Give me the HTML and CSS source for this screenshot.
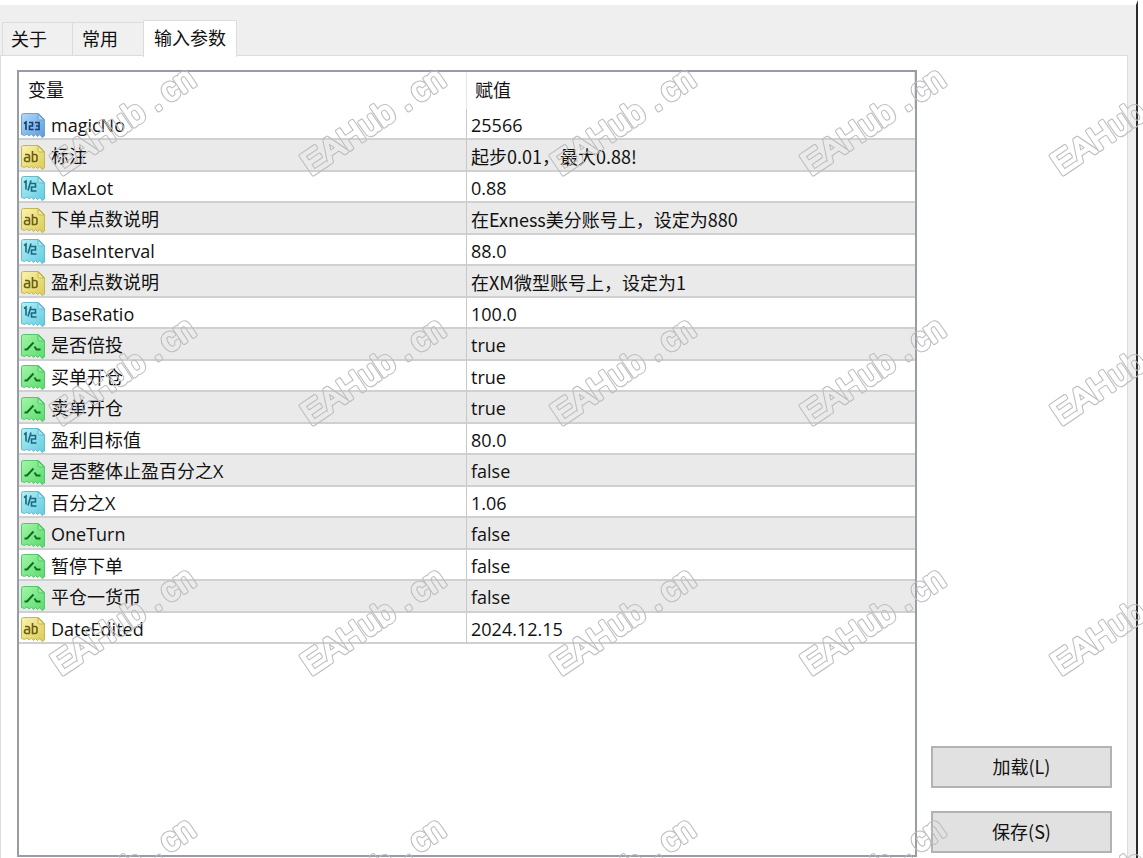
FILE: index.html
```html
<!DOCTYPE html>
<html lang="zh-CN">
<head>
    <meta charset="UTF-8">
    <title>输入参数</title>
    <link rel="stylesheet" href="styles.css">
</head>
<body>
    <svg class="defs" width="0" height="0" aria-hidden="true">
        <defs>
            <linearGradient id="gBlue" x1="0" y1="0" x2="1" y2="1">
                <stop offset="0" stop-color="#b4daf8"/>
                <stop offset="1" stop-color="#5b9ada"/>
            </linearGradient>
            <linearGradient id="gYellow" x1="0" y1="0" x2="1" y2="1">
                <stop offset="0" stop-color="#fbf3ae"/>
                <stop offset="1" stop-color="#d9cb58"/>
            </linearGradient>
            <linearGradient id="gCyan" x1="0" y1="0" x2="1" y2="1">
                <stop offset="0" stop-color="#b5eff6"/>
                <stop offset="1" stop-color="#62cbe0"/>
            </linearGradient>
            <linearGradient id="gGreen" x1="0" y1="0" x2="1" y2="1">
                <stop offset="0" stop-color="#a4f5a8"/>
                <stop offset="1" stop-color="#57dc6b"/>
            </linearGradient>
            <path id="paper" d="M2.5 .5H17.5L23.5 6.5V23L21 24.500L19 21.500L16.500 23.500L14.500 21.500L12.500 23.500L10.500 21L8 23L6 21L3.500 22.500L.5 21.500V2.500Q.5 .5 2.500 .5Z"/>
            <path id="fold" d="M17 1V5.500Q17 7 18.500 7H23Z"/>
        </defs>
        <symbol id="int" viewBox="0 0 24 25">
            <use href="#paper" fill="url(#gBlue)" stroke="#6ba3d8"/>
            <use href="#fold" fill="#a9d2f5" stroke="#6ba3d8"/>
            <path d="M3 10.500L5 9V17M8 9.500H11.500V13H8.500V16.500H12.500M14 9.500H18V16.500H14M15 13H18" fill="none" stroke="#123f70" stroke-width="1.600"/>
        </symbol>
        <symbol id="str" viewBox="0 0 24 25">
            <use href="#paper" fill="url(#gYellow)" stroke="#c4b655"/>
            <use href="#fold" fill="#f3e990" stroke="#c4b655"/>
            <path d="M4 9.500H6.500Q8.500 9.500 8.500 11.500V16.500M8.500 12.500H5.500Q3.500 12.500 3.500 14.500T5.500 16.500H8.500M11.500 6V16.500H14Q16 16.500 16 14.500V11.500Q16 9.500 14 9.500H11.500" fill="none" stroke="#6b5e12" stroke-width="1.600"/>
        </symbol>
        <symbol id="dbl" viewBox="0 0 24 25">
            <use href="#paper" fill="url(#gCyan)" stroke="#66bccc"/>
            <use href="#fold" fill="#a5e8f1" stroke="#66bccc"/>
            <path d="M3 6.500L5 5V13.500M10 4.500L7 14.500M10 7.500H14.500V11H10.500V15H15.500" fill="none" stroke="#176a80" stroke-width="1.600"/>
        </symbol>
        <symbol id="bool" viewBox="0 0 24 25">
            <use href="#paper" fill="url(#gGreen)" stroke="#58c46c"/>
            <use href="#fold" fill="#8df09a" stroke="#58c46c"/>
            <path d="M3.500 15.500H6L12.500 8.500M13.500 12.500L15.500 15.500H19.500" fill="none" stroke="#0f6a22" stroke-width="1.900"/>
        </symbol>
    </svg>

    <div class="dialog">
        <div class="tabs" role="tablist">
            <button class="tab" type="button" role="tab" aria-selected="false">关于</button>
            <button class="tab" type="button" role="tab" aria-selected="false">常用</button>
            <button class="tab active" type="button" role="tab" aria-selected="true">输入参数</button>
        </div>
        <div class="page" role="tabpanel">
            <div class="list">
                <table class="params">
                    <thead>
                        <tr><th>变量</th><th>赋值</th></tr>
                    </thead>
                    <tbody>
                        <tr><td><div class="name"><svg class="icon"><use href="#int"/></svg>magicNo</div></td><td>25566</td></tr>
                        <tr><td><div class="name"><svg class="icon"><use href="#str"/></svg>标注</div></td><td class="cn">起步0.01，最大0.88!</td></tr>
                        <tr><td><div class="name"><svg class="icon"><use href="#dbl"/></svg>MaxLot</div></td><td>0.88</td></tr>
                        <tr><td><div class="name"><svg class="icon"><use href="#str"/></svg>下单点数说明</div></td><td class="cn">在Exness美分账号上，设定为880</td></tr>
                        <tr><td><div class="name"><svg class="icon"><use href="#dbl"/></svg>BaseInterval</div></td><td>88.0</td></tr>
                        <tr><td><div class="name"><svg class="icon"><use href="#str"/></svg>盈利点数说明</div></td><td class="cn">在XM微型账号上，设定为1</td></tr>
                        <tr><td><div class="name"><svg class="icon"><use href="#dbl"/></svg>BaseRatio</div></td><td>100.0</td></tr>
                        <tr><td><div class="name"><svg class="icon"><use href="#bool"/></svg>是否倍投</div></td><td>true</td></tr>
                        <tr><td><div class="name"><svg class="icon"><use href="#bool"/></svg>买单开仓</div></td><td>true</td></tr>
                        <tr><td><div class="name"><svg class="icon"><use href="#bool"/></svg>卖单开仓</div></td><td>true</td></tr>
                        <tr><td><div class="name"><svg class="icon"><use href="#dbl"/></svg>盈利目标值</div></td><td>80.0</td></tr>
                        <tr><td><div class="name"><svg class="icon"><use href="#bool"/></svg>是否整体止盈百分之X</div></td><td>false</td></tr>
                        <tr><td><div class="name"><svg class="icon"><use href="#dbl"/></svg>百分之X</div></td><td>1.06</td></tr>
                        <tr><td><div class="name"><svg class="icon"><use href="#bool"/></svg>OneTurn</div></td><td>false</td></tr>
                        <tr><td><div class="name"><svg class="icon"><use href="#bool"/></svg>暂停下单</div></td><td>false</td></tr>
                        <tr><td><div class="name"><svg class="icon"><use href="#bool"/></svg>平仓一货币</div></td><td>false</td></tr>
                        <tr><td><div class="name"><svg class="icon"><use href="#str"/></svg>DateEdited</div></td><td>2024.12.15</td></tr>
                    </tbody>
                </table>
            </div>
            <div class="side">
                <button class="btn" type="button">加载(L)</button>
                <button class="btn" type="button">保存(S)</button>
            </div>
        </div>
    </div>

    <svg class="watermark" aria-hidden="true">
        <defs>
            <mask id="outline" maskUnits="userSpaceOnUse" x="0" y="0" width="250" height="250">
                <text class="mark mark-outer" x="61" y="176" transform="rotate(-34 61 176)">EAHub<tspan dx="10">.</tspan><tspan dx="6">cn</tspan></text>
                <text class="mark mark-inner" x="61" y="176" transform="rotate(-34 61 176)">EAHub<tspan dx="10">.</tspan><tspan dx="6">cn</tspan></text>
            </mask>
            <pattern id="tile" width="250" height="250" patternUnits="userSpaceOnUse">
                <rect width="250" height="250" fill="#bcbcbc" mask="url(#outline)"/>
            </pattern>
        </defs>
        <rect width="100%" height="100%" fill="url(#tile)"/>
    </svg>
</body>
</html>
```
FILE: styles.css
```css
* {
    box-sizing: border-box;
}
body {
    margin: 0;
    background-color: #fff;
    color: #111;
    font-family: "Open Sans", "Noto Sans CJK SC", sans-serif;
    font-size: 18px;
    line-height: 24px;
}
button {
    font-family: "Noto Sans CJK SC", sans-serif;
    font-size: 18px;
    line-height: 24px;
    color: #111;
}
.defs {
    position: absolute;
}
.dialog {
    display: flex;
    flex-direction: column;
    height: 100vh;
    min-height: 700px;
    margin-right: 5px;
    border-top: 5px solid #fff;
    border-right: 2px solid #2b2b2b;
    background-color: #efefef;
}
.tabs {
    display: flex;
    align-items: flex-end;
    height: 51px;
    padding: 14px 0 0 2px;
}
.tab {
    height: 34px;
    padding: 0 25px 2px 8px;
    border: 1px solid #dcdcdc;
    border-right: 0;
    background-color: #f0f0f0;
}
.tab + .tab {
    padding-left: 9px;
}
.tab.active {
    z-index: 1;
    height: 37px;
    margin-bottom: -1px;
    padding: 0 10px 5px;
    border-right: 1px solid #dcdcdc;
    border-bottom: 0;
    background-color: #fff;
}
.page {
    display: flex;
    flex: 1;
    gap: 14px;
    min-height: 0;
    margin-top: -1px;
    margin-right: 8px;
    padding: 14px 15px 0 16px;
    border: 1px solid #dcdcdc;
    border-bottom: 0;
    background-color: #fff;
}
.list {
    flex: 1;
    margin-bottom: 1px;
    border: 2px solid #989ca4;
}
.params {
    width: 100%;
    table-layout: fixed;
    border-collapse: separate;
    border-spacing: 0;
}
.params th {
    height: 37px;
    padding: 0 9px 3px;
    border-right: 1px solid #e5e5e5;
    font-weight: normal;
    text-align: left;
    font-family: "Noto Sans CJK SC", sans-serif;
}
.params th:last-child {
    padding-left: 8px;
}
.params td {
    height: 31px;
    padding: 2px 4px 0;
    border-bottom: 2px solid #d0d0d0;
    white-space: nowrap;
}
.params tr:nth-child(even) td {
    height: 32px;
    background-color: #eaeaea;
}
.params td:first-child {
    padding: 2px 2px 0;
    border-right: 1px solid #c8c8c8;
}
.params .cn {
    font-family: "Noto Sans CJK SC", sans-serif;
}
.name {
    display: flex;
    align-items: center;
    gap: 6px;
}
.icon {
    width: 24px;
    height: 25px;
    margin-top: 2px;
}
.side {
    display: flex;
    flex-direction: column;
    justify-content: flex-end;
    gap: 23px;
    width: 181px;
    padding-bottom: 5px;
}
.btn {
    height: 42px;
    padding-bottom: 3px;
    border: 2px solid #b2b2b2;
    background-color: #e1e1e1;
}
.watermark {
    position: absolute;
    top: 0;
    left: 0;
    width: 100%;
    height: 100%;
    pointer-events: none;
}
.mark {
    font-family: "Liberation Sans", sans-serif;
    font-size: 33px;
    stroke-linejoin: round;
}
.mark-outer {
    fill: #fff;
    stroke: #fff;
    stroke-width: 4px;
}
.mark-inner {
    fill: #000;
    stroke: #000;
    stroke-width: 2px;
}
```
